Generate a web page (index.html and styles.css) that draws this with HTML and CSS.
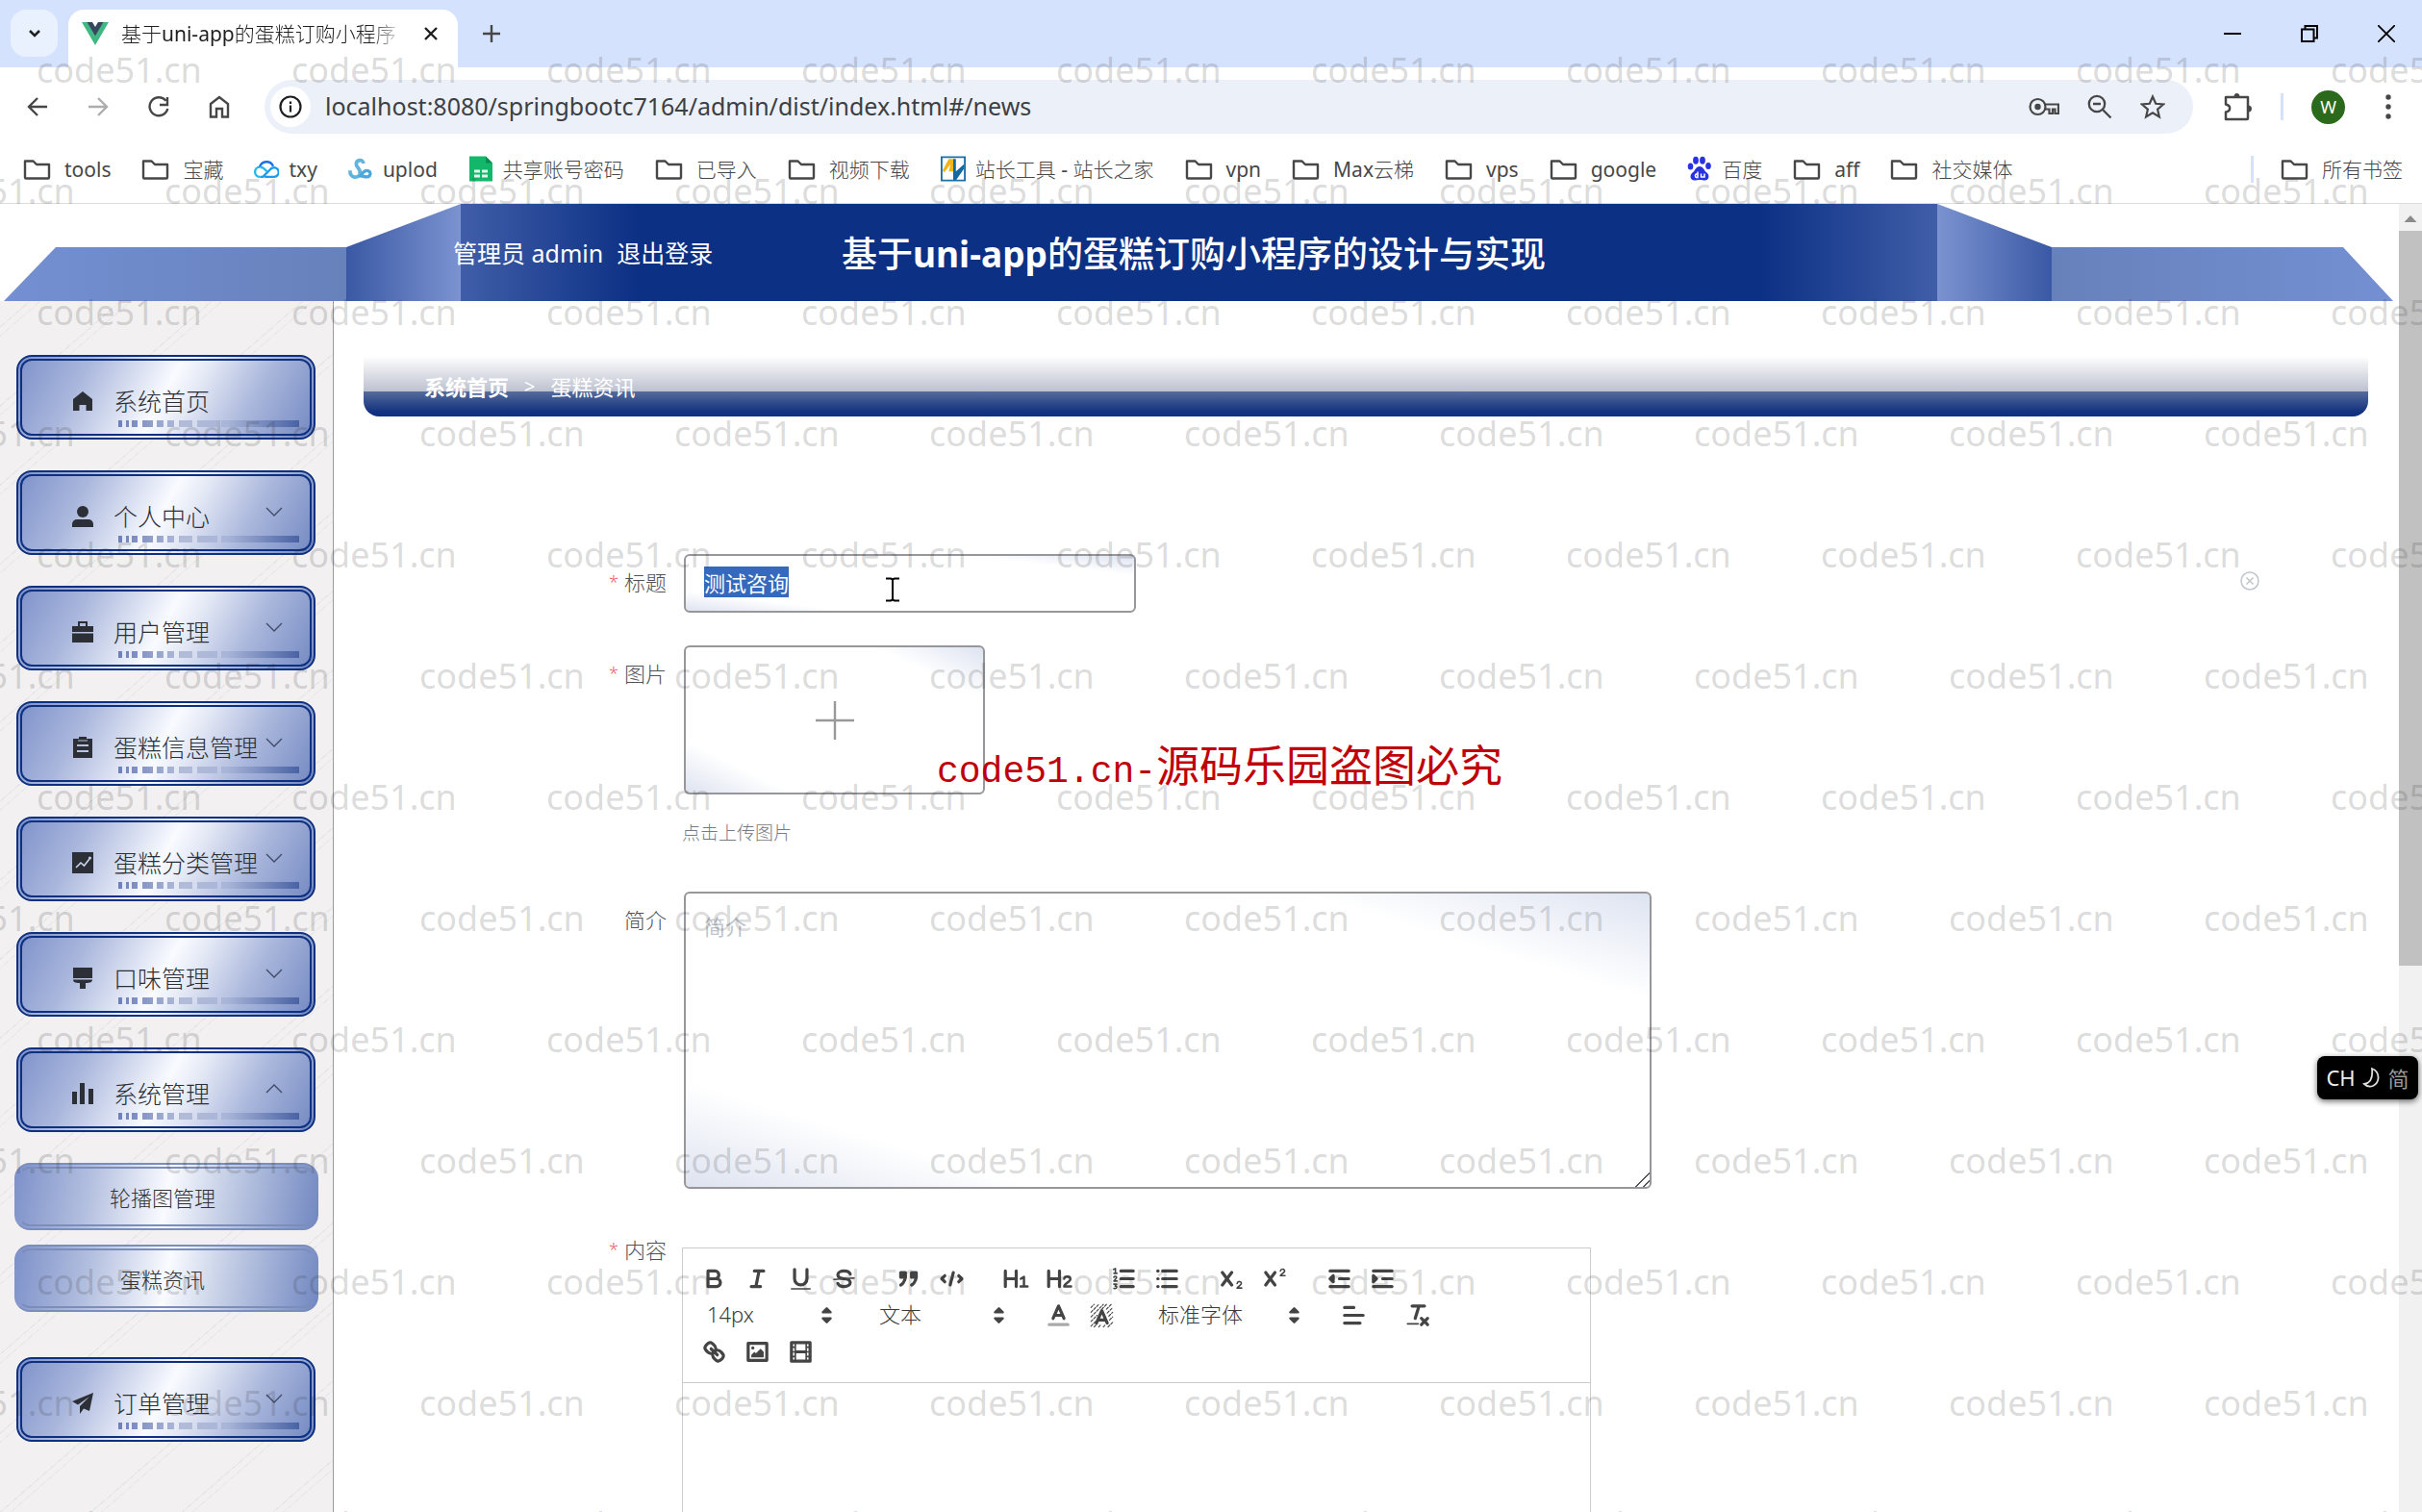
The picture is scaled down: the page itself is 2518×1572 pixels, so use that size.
FILE: index.html
```html
<!DOCTYPE html>
<html lang="zh-CN">
<head>
<meta charset="utf-8">
<meta name="viewport" content="width=device-width, initial-scale=1">
<title>基于uni-app的蛋糕订购小程序的设计与实现</title>
<link rel="stylesheet" href="styles.css">
</head>
<body>
<svg class="defs" aria-hidden="true">
  <symbol id="folder" viewBox="0 0 29 24"><path d="M2 20V3.500h8.500l3.500 3.500h13V20.500a1 1 0 0 1-1 1H3a1 1 0 0 1-1-1z" fill="none" stroke="#474747" stroke-width="2.400" stroke-linejoin="round"/></symbol>
  <symbol id="down" viewBox="0 0 18 18"><path d="M1 5l8 8 8-8" fill="none" stroke="#3f4a66" stroke-width="1.300"/></symbol>
  <symbol id="updown" viewBox="0 0 18 18"><path d="M6.500 11h5L9 13.500zM6.500 7h5L9 4.500z" fill="#444" stroke="#444" stroke-width="1.500" stroke-linejoin="round"/></symbol>
  <linearGradient id="bar" x1="0" x2="1"><stop offset="0" stop-color="#6d7fb9"/><stop offset=".35" stop-color="#b2bcd8"/><stop offset=".6" stop-color="#a9b5d8"/><stop offset="1" stop-color="#4862a4"/></linearGradient>
  <symbol id="ticks" viewBox="0 0 188 7" preserveAspectRatio="none"><path fill="url(#bar)" d="M0 0h4v7H0zM8 0h3v7H8zM14 0h6v7h-6zM25 0h11v7H25zM40 0h7v7h-7zM51 0h7v7h-7zM63 0h14v7H63zM82 0h21v7H82zM107 0h81v7h-81z"/></symbol>
</svg>

<div class="browser">
  <header class="tabstrip">
    <button class="tabsearch" type="button" aria-label="搜索标签页"><svg width="14" height="10" viewBox="0 0 14 10"><path d="M2 2l5 5 5-5" fill="none" stroke="#1f1f1f" stroke-width="2.500"/></svg></button>
    <div class="tab">
      <svg width="28" height="24" viewBox="0 0 28 24"><path d="M0 0h6l8 14 8-14h6L14 24z" fill="#41b883"/><path d="M5.500 0h5.500l3 5 3-5h5.500L14 14.500z" fill="#35495e"/></svg>
      <span class="tab-title">基于uni-app的蛋糕订购小程序</span>
      <button class="plain" type="button" aria-label="关闭标签页"><svg width="16" height="16" viewBox="0 0 16 16"><path d="M2 2l12 12M14 2L2 14" stroke="#1f1f1f" stroke-width="2.400"/></svg></button>
    </div>
    <button class="plain newtab" type="button" aria-label="新建标签页"><svg width="18" height="18" viewBox="0 0 18 18"><path d="M9 0v18M0 9h18" stroke="#474747" stroke-width="2.400"/></svg></button>
    <div class="window-buttons">
      <button class="plain" type="button" aria-label="最小化"><svg width="18" height="18" viewBox="0 0 18 18"><path d="M0 9h18" stroke="#000" stroke-width="2"/></svg></button>
      <button class="plain" type="button" aria-label="还原"><svg width="18" height="18" viewBox="0 0 18 18"><path d="M1 4.500h12.500V17H1zM4.500 4V1H17v12.500h-3" fill="none" stroke="#000" stroke-width="2"/></svg></button>
      <button class="plain" type="button" aria-label="关闭"><svg width="18" height="18" viewBox="0 0 18 18"><path d="M0 0l18 18M18 0L0 18" stroke="#000" stroke-width="1.800"/></svg></button>
    </div>
  </header>

  <div class="toolbar">
    <nav class="nav-buttons">
      <button class="plain" type="button" aria-label="后退"><svg width="22" height="22" viewBox="0 0 22 22"><path d="M21 11H2M11 2l-9 9 9 9" fill="none" stroke="#474747" stroke-width="2.400"/></svg></button>
      <button class="plain" type="button" aria-label="前进"><svg width="22" height="22" viewBox="0 0 22 22"><path d="M1 11h19M11 2l9 9-9 9" fill="none" stroke="#adadad" stroke-width="2.400"/></svg></button>
      <button class="plain" type="button" aria-label="重新加载"><svg width="22" height="22" viewBox="0 0 22 22"><path d="M18.500 4.800A9.500 9.500 0 1 0 20.300 13M20 1v8h-8" fill="none" stroke="#474747" stroke-width="2.400"/></svg></button>
      <button class="plain" type="button" aria-label="主页"><svg width="22" height="24" viewBox="0 0 22 24"><path d="M2 9l9-7 9 7v13.500h-6V14H8v8.500H2z" fill="none" stroke="#474747" stroke-width="2.400"/></svg></button>
    </nav>
    <div class="omnibox">
      <span class="site-info"><svg width="24" height="24" viewBox="0 0 24 24"><circle cx="12" cy="12" r="10.500" fill="none" stroke="#1f1f1f" stroke-width="2.200"/><path d="M12 10.500v7M12 6.500v2.400" stroke="#1f1f1f" stroke-width="2.200"/></svg></span>
      <input class="url" type="text" aria-label="地址" value="localhost:8080/springbootc7164/admin/dist/index.html#/news">
      <svg width="32" height="20" viewBox="0 0 32 20"><circle cx="9.500" cy="10" r="8" fill="none" stroke="#474747" stroke-width="2.200"/><circle cx="9.500" cy="10" r="3.200" fill="#474747"/><path d="M17 7.500h14V17h-3.500v-4.500H25V17h-3.500v-4.500H17" fill="none" stroke="#474747" stroke-width="2.200"/></svg>
      <svg width="26" height="26" viewBox="0 0 26 26"><circle cx="10" cy="10" r="8.200" fill="none" stroke="#474747" stroke-width="2.300"/><path d="M16 16l8.500 8.500M6 10h8" stroke="#474747" stroke-width="2.400"/></svg>
      <svg width="26" height="26" viewBox="0 0 26 26"><path d="M13 2.500l3.200 7.300 7.900.7-6 5.200 1.800 7.800-6.900-4.100-6.900 4.100 1.800-7.800-6-5.200 7.900-.7z" fill="none" stroke="#474747" stroke-width="2.200"/></svg>
    </div>
    <svg width="30" height="30" viewBox="0 0 30 30"><path d="M2 5h23v22a1 1 0 0 1-1 1H2v-7.500c5.500-1 5.500-7 0-8z" fill="none" stroke="#474747" stroke-width="2.500" stroke-linejoin="round"/><path d="M10.500 5a3 4 0 0 1 6 0zM25 13.500a4 3.500 0 0 1 0 7z" fill="#474747"/></svg>
    <span class="sep"></span>
    <span class="avatar">W</span>
    <svg class="dots" width="6" height="26" viewBox="0 0 6 26"><g fill="#474747"><circle cx="3" cy="3" r="2.700"/><circle cx="3" cy="13" r="2.700"/><circle cx="3" cy="23" r="2.700"/></g></svg>
  </div>

  <nav class="bookmarks">
    <a href="#tools"><svg class="bm"><use href="#folder"/></svg>tools</a>
    <a href="#bz"><svg class="bm"><use href="#folder"/></svg>宝藏</a>
    <a href="#txy"><svg class="bm site" viewBox="0 0 28 24"><g fill="none" stroke-width="2.600"><path d="M7 21a5.500 5.500 0 0 1-.5-11" stroke="#2ab7ea"/><path d="M6.500 10a8 8 0 0 1 15-1" stroke="#1e6fe0"/><path d="M7 21h3L19 12a5.200 5.200 0 1 1 3 9H12" stroke="#1b9cec"/><path d="M7 10.500a6 6 0 0 1 5 2l3 3" stroke="#2ab7ea"/></g></svg>txy</a>
    <a href="#uplod"><svg class="bm site" viewBox="0 0 28 24"><g fill="none" stroke-width="4"><path d="M2 14c0 9 9 9 11 4 2-6-4-7-4-11 0-6 8-6 8-1" stroke="#62b4dc"/><path d="M14 20c2-3 3-6 7-6 5 0 5 7 0 7-3 0-5-1-7-1z" stroke="#4aa9dc" stroke-width="3.500"/></g></svg>uplod</a>
    <a href="#sheet"><svg class="bm site" viewBox="0 0 26 26"><path d="M1 0h17l7 7v19H1z" fill="#12b76a"/><path d="M18 0l7 7h-7z" fill="#0a8d4f"/><path d="M6 14h6v3H6zM14 14h6v3h-6zM6 19h6v3H6zM14 19h6v3h-6z" fill="#e4f7ed"/></svg>共享账号密码</a>
    <a href="#in"><svg class="bm"><use href="#folder"/></svg>已导入</a>
    <a href="#video"><svg class="bm"><use href="#folder"/></svg>视频下载</a>
    <a href="#zz"><svg class="bm site" viewBox="0 0 28 28"><path d="M1 1h26v26H1z" fill="#fff" stroke="#1a6fa5" stroke-width="2"/><path d="M2 16L9 3h5v14H9l2-8-7 9z" fill="#f3b51b"/><path d="M14 3h3v14l9-8v5l-9 13h-3z" fill="#14699f"/></svg>站长工具 - 站长之家</a>
    <a href="#vpn"><svg class="bm"><use href="#folder"/></svg>vpn</a>
    <a href="#max"><svg class="bm"><use href="#folder"/></svg>Max云梯</a>
    <a href="#vps"><svg class="bm"><use href="#folder"/></svg>vps</a>
    <a href="#google"><svg class="bm"><use href="#folder"/></svg>google</a>
    <a href="#baidu"><svg class="bm site" viewBox="0 0 26 26"><g fill="#2932e1"><ellipse cx="3.500" cy="10.500" rx="2.800" ry="3.600"/><ellipse cx="9" cy="4.200" rx="2.900" ry="4"/><ellipse cx="16" cy="4.200" rx="2.900" ry="4"/><ellipse cx="22" cy="10" rx="2.800" ry="3.600"/><path d="M13 10.500c4 0 4.500 4.500 7.500 6.500 3.500 3 2 8-2 8-2 0-3.500-.5-5.500-.5s-3.500.5-5.500.5c-4 0-5.500-5-2-8 3-2 3.500-6.500 7.500-6.500z"/></g><path d="M11 16v6H9.500a2 2 0 0 1 0-3.500H11M14.500 18v3.500h3.500V18" fill="none" stroke="#fff" stroke-width="1.500"/></svg>百度</a>
    <a href="#aff"><svg class="bm"><use href="#folder"/></svg>aff</a>
    <a href="#social"><svg class="bm"><use href="#folder"/></svg>社交媒体</a>
    <span class="sep push"></span>
    <a class="all" href="#all"><svg class="bm"><use href="#folder"/></svg>所有书签</a>
  </nav>

  <div class="viewport">
    <div class="page">
      <header class="banner">
        <svg class="banner-art" viewBox="0 0 2494 101" preserveAspectRatio="none" aria-hidden="true">
          <defs>
            <linearGradient id="wl" x1="0" x2="1"><stop offset="0" stop-color="#7490d2"/><stop offset="1" stop-color="#6781bb"/></linearGradient>
            <linearGradient id="wr" x1="1" x2="0"><stop offset="0" stop-color="#7490d2"/><stop offset="1" stop-color="#6781bb"/></linearGradient>
            <linearGradient id="fl" x1="0" x2="1"><stop offset="0" stop-color="#3a58a4"/><stop offset="1" stop-color="#7b93d0"/></linearGradient>
            <linearGradient id="fr" x1="1" x2="0"><stop offset="0" stop-color="#3a58a4"/><stop offset="1" stop-color="#7b93d0"/></linearGradient>
            <linearGradient id="mid" x1="0" x2="1"><stop offset="0" stop-color="#405ea8"/><stop offset=".12" stop-color="#0c3084"/><stop offset=".88" stop-color="#0c3084"/><stop offset="1" stop-color="#405ea8"/></linearGradient>
          </defs>
          <path d="M58 45H360V101H4z" fill="url(#wl)"/>
          <path d="M360 45L479 0V101H360z" fill="url(#fl)"/>
          <path d="M479 0H2014V101H479z" fill="url(#mid)"/>
          <path d="M2014 0L2133 45V101H2014z" fill="url(#fr)"/>
          <path d="M2133 45H2436L2488 101H2133z" fill="url(#wr)"/>
        </svg>
        <div class="account"><span>管理员 admin</span><a href="#logout">退出登录</a></div>
        <h1>基于<b>uni-app</b>的蛋糕订购小程序的设计与实现</h1>
      </header>

      <div class="body">
        <aside class="sidebar">
          <button class="item" type="button"><svg class="ico" viewBox="0 0 22 22"><path d="M11 1l10 8v12h-6.500v-6h-7v6H1V9z"/></svg><span>系统首页</span><svg class="ticks"><use href="#ticks"/></svg></button>
          <button class="item" type="button"><svg class="ico" viewBox="0 0 22 22"><circle cx="11" cy="6" r="6"/><path d="M0 22v-3a5 5 0 0 1 5-5h12a5 5 0 0 1 5 5v3z"/></svg><span>个人中心</span><svg class="chev"><use href="#down"/></svg><svg class="ticks"><use href="#ticks"/></svg></button>
          <button class="item" type="button"><svg class="ico" viewBox="0 0 22 22"><path d="M6 5V0h10v5h6v6H0V5zm2 0h6V2H8zM0 12.500h22V22H0z"/></svg><span>用户管理</span><svg class="chev"><use href="#down"/></svg><svg class="ticks"><use href="#ticks"/></svg></button>
          <button class="item" type="button"><svg class="ico" viewBox="0 0 22 22"><path d="M7 0h8v2h6v20H1V2h6zM5 8v2h12V8zm0 6v2h12v-2zM6 4.500h10v-1H6z" fill-rule="evenodd"/></svg><span>蛋糕信息管理</span><svg class="chev"><use href="#down"/></svg><svg class="ticks"><use href="#ticks"/></svg></button>
          <button class="item" type="button"><svg class="ico" viewBox="0 0 22 22"><path d="M0 0h22v22H0z"/><path d="M4 16l5-5 3.500 3L18 7" fill="none" stroke="#cdd5ea" stroke-width="1.600"/><circle cx="18.500" cy="6" r="1.500" fill="#cdd5ea"/></svg><span>蛋糕分类管理</span><svg class="chev"><use href="#down"/></svg><svg class="ticks"><use href="#ticks"/></svg></button>
          <button class="item" type="button"><svg class="ico" viewBox="0 0 22 22"><path d="M1 0h20v11H1zM1 12.500h20c0 2.500-2 3.500-7 3.500v5a2 2 0 0 1-6 0v-5c-5 0-7-1-7-3.500z"/></svg><span>口味管理</span><svg class="chev"><use href="#down"/></svg><svg class="ticks"><use href="#ticks"/></svg></button>
          <button class="item" type="button" aria-expanded="true"><svg class="ico" viewBox="0 0 22 22"><path d="M0 9h5v13H0zM8 0h5v22H8zM17 6h5v16h-5z"/></svg><span>系统管理</span><svg class="chev up"><use href="#down"/></svg><svg class="ticks"><use href="#ticks"/></svg></button>
          <div class="submenu">
            <a href="#/config">轮播图管理</a>
            <a href="#/news">蛋糕资讯</a>
          </div>
          <button class="item" type="button"><svg class="ico" viewBox="0 0 22 22"><path d="M22 0L0 9l6 3.500L18 4 8 14v8l4-5.500 6 2.500z"/></svg><span>订单管理</span><svg class="chev"><use href="#down"/></svg><svg class="ticks"><use href="#ticks"/></svg></button>
        </aside>

        <main class="main">
          <nav class="crumbs" aria-label="面包屑"><a href="#/">系统首页</a><span class="gt">&gt;</span><span>蛋糕资讯</span></nav>

          <form class="form">
            <div class="row">
              <label class="label required" for="title">标题</label>
              <div class="control line">
                <input class="field title" id="title" type="text" value="测试咨询">
                <button class="plain clear" type="button" aria-label="清空"><svg width="20" height="20" viewBox="0 0 20 20"><circle cx="10" cy="10" r="9" fill="none" stroke="#c0c4cc" stroke-width="1.500"/><path d="M6.500 6.500l7 7M13.500 6.500l-7 7" stroke="#c0c4cc" stroke-width="1.500"/></svg></button>
              </div>
            </div>
            <div class="row">
              <label class="label required" for="upload">图片</label>
              <div class="control">
                <button class="field upload" id="upload" type="button" aria-label="上传图片"><svg width="42" height="42" viewBox="0 0 42 42"><path d="M21 1v40M1 21h40" stroke="#999" stroke-width="2.400"/></svg></button>
                <p class="hint">点击上传图片</p>
              </div>
            </div>
            <div class="row">
              <label class="label" for="brief">简介</label>
              <div class="control"><textarea class="field brief" id="brief" placeholder="简介"></textarea></div>
            </div>
            <div class="row">
              <span class="label required" id="content-label">内容</span>
              <div class="editor" role="group" aria-labelledby="content-label">
                <div class="tools">
                  <div class="group">
                    <button type="button" aria-label="粗体"><svg viewBox="0 0 18 18"><path d="M5 4h4.500a2.500 2.500 0 0 1 0 5H5zM5 9h5.500a2.500 2.500 0 0 1 0 5H5z"/></svg></button>
                    <button type="button" aria-label="斜体"><svg viewBox="0 0 18 18"><path d="M7 4h6M5 14h6M8 14l2-10"/></svg></button>
                    <button type="button" aria-label="下划线"><svg viewBox="0 0 18 18"><path d="M5 3v6a4 4 0 0 0 8 0V3"/><path class="thin" d="M3 15.500h12"/></svg></button>
                    <button type="button" aria-label="删除线"><svg viewBox="0 0 18 18"><path d="M13 6c-.5-1.300-2-2-4-2-2.300 0-4 1-4 2.500C5 8.500 7 8.800 9 9s4 .5 4 2.500c0 1.500-1.700 2.500-4 2.500-2 0-3.500-.700-4-2"/><path class="thin" d="M2.500 9.500l13-1"/></svg></button>
                  </div>
                  <div class="group">
                    <button type="button" aria-label="引用"><svg viewBox="0 0 18 18"><path class="solid" d="M4 5h3v3H4zM11 5h3v3h-3z"/><path d="M7 7.500c0 4-3 5.500-3 5.500M14 7.500c0 4-3 5.500-3 5.500"/></svg></button>
                    <button type="button" aria-label="代码"><svg viewBox="0 0 18 18"><path d="M4.500 7L2.500 9l2 2M13.500 7l2 2-2 2M10 5L8 13"/></svg></button>
                  </div>
                  <div class="group">
                    <button type="button" aria-label="标题1"><svg viewBox="0 0 18 18"><path d="M2 4v10M9 4v10M2 9h7"/><path class="mid" d="M12 9l2-1.300V14M11.800 14h4.500"/></svg></button>
                    <button type="button" aria-label="标题2"><svg viewBox="0 0 18 18"><path d="M2 4v10M9 4v10M2 9h7"/><path class="mid" d="M12 9c.5-2 4-1.800 4 .3 0 1.700-3.800 2.700-4 4.700h4.500"/></svg></button>
                  </div>
                  <div class="group">
                    <button type="button" aria-label="有序列表"><svg viewBox="0 0 18 18"><path d="M7 4h8M7 9h8M7 14h8"/><path class="thin" d="M2.300 3l1.200-.600v3M2.500 5.500h2M2.500 8c.3-.8 2-.7 1.700.4L2.500 10.500h2M2.500 12.500h1.800l-1 1.200c1.700 0 1.200 2-.8 1.500"/></svg></button>
                    <button type="button" aria-label="无序列表"><svg viewBox="0 0 18 18"><path d="M6 4h9M6 9h9M6 14h9M2.900 4h.2M2.900 9h.2M2.900 14h.2"/></svg></button>
                  </div>
                  <div class="group">
                    <button type="button" aria-label="下标"><svg viewBox="0 0 18 18"><path d="M3 5l6 8M9 5l-6 8"/><path class="thin" d="M12.500 12c.3-1.700 3-1.500 2.700.2-.2 1-2.200 1.800-2.700 2.800h3"/></svg></button>
                    <button type="button" aria-label="上标"><svg viewBox="0 0 18 18"><path d="M3 5l6 8M9 5l-6 8"/><path class="thin" d="M12.500 4c.3-1.700 3-1.500 2.700.2-.2 1-2.200 1.800-2.700 2.800h3"/></svg></button>
                  </div>
                  <div class="group">
                    <button type="button" aria-label="减少缩进"><svg viewBox="0 0 18 18"><path d="M3 4h12M9 9h6M3 14h12"/><path class="solid" d="M5 7v4L3 9z"/></svg></button>
                    <button type="button" aria-label="增加缩进"><svg viewBox="0 0 18 18"><path d="M3 4h12M9 9h6M3 14h12"/><path class="solid" d="M3 7v4l2-2z"/></svg></button>
                  </div>
                  <div class="group picker"><select aria-label="字号"><option>14px</option></select><svg><use href="#updown"/></svg></div>
                  <div class="group picker"><select aria-label="段落"><option>文本</option></select><svg><use href="#updown"/></svg></div>
                  <div class="group">
                    <button type="button" aria-label="字体颜色"><svg viewBox="0 0 18 18"><path d="M5.500 11L9 3l3.500 8M6.400 9h5.200"/><path d="M3 15h12" stroke="#aaa"/></svg></button>
                    <button type="button" aria-label="背景颜色"><svg viewBox="0 0 18 18"><path class="hatch" d="M2 4l2-2M2 7l5-5M2 10l8-8M2 13l4-4M2 16l3-3M4 16.500l2-2M9 5l3-3M12 5l3-3M12.500 7.500L16 4M13.500 9.500L16 7M14 12l2-2M7 16.500l1-1M10 16.500l1-1M13 16.500l3-3"/><path d="M5.500 14L9 6l3.500 8M6.400 12h5.200"/></svg></button>
                  </div>
                  <div class="group picker font"><select aria-label="字体"><option>标准字体</option></select><svg><use href="#updown"/></svg></div>
                  <div class="group">
                    <button type="button" aria-label="对齐"><svg viewBox="0 0 18 18"><path d="M3 4h6M3 9h12M3 14h10"/></svg></button>
                  </div>
                  <div class="group">
                    <button type="button" aria-label="清除格式"><svg viewBox="0 0 18 18"><path d="M5 3h8M9.500 3L7 11M11 11l4 4M15 11l-4 4"/><path class="thin" d="M2 14.500h7"/></svg></button>
                  </div>
                  <div class="group">
                    <button type="button" aria-label="链接"><svg viewBox="0 0 18 18"><path d="M7 7l4 4M8.900 4.577a3.476 3.476 0 0 1 .36 4.679A3.476 3.476 0 0 1 4.577 8.900C3.185 7.500 2.035 6.400 4.217 4.217S7.500 3.185 8.900 4.577ZM13.423 9.100a3.476 3.476 0 0 0-4.679-.36 3.476 3.476 0 0 0 .36 4.679c1.392 1.392 2.500 2.542 4.679.36S14.815 10.500 13.423 9.100Z"/></svg></button>
                    <button type="button" aria-label="图片"><svg viewBox="0 0 18 18"><path d="M3 3.500h12v11H3z"/><path class="solid flat" d="M5 12.500V11l2-2 1 1 3-3 2 2v3.500z"/><circle class="solid flat" cx="6" cy="6.500" r="1"/></svg></button>
                    <button type="button" aria-label="视频"><svg viewBox="0 0 18 18"><path d="M3 3h12v12H3z"/><path d="M6 9h6"/><path class="thin" d="M5.500 3v12M12.500 3v12M3 6h2.500M3 9h2.500M3 12h2.500M12.500 6H15M12.500 9H15M12.500 12H15"/></svg></button>
                  </div>
                </div>
                <div class="canvas" contenteditable="true" role="textbox" aria-labelledby="content-label"></div>
              </div>
            </div>
          </form>
        </main>
      </div>
    </div>
    <div class="scrollbar" aria-hidden="true"><svg width="24" height="28" viewBox="0 0 24 28"><path d="M12 12l6.500 7h-13z" fill="#8b8b8b"/></svg><div class="thumb"></div></div>
  </div>
</div>

<div class="watermarks" id="watermarks" aria-hidden="true"></div>
<p class="notice">code51.cn-<span>源码乐园盗图必究</span></p>
<div class="ime"><span>CH</span><svg width="20" height="22" viewBox="0 0 20 22"><path d="M10 2c8 3 9 14 1 18-4 1.500-7 0-9-2 7-1 9-7 8-16z" fill="none" stroke="#ddd" stroke-width="1.800"/></svg><span class="dim">简</span></div>
<svg class="cursor" width="16" height="26" viewBox="0 0 16 26" aria-hidden="true"><path d="M1 1.500h5l2 1 2-1h5M8 2v22M1 24.500h5l2-1 2 1h5" fill="none" stroke="#000" stroke-width="2"/></svg>
<script src="page.js"></script>
</body>
</html>
```

FILE: styles.css
```css
* { box-sizing: border-box; }

body {
  margin: 0;
  height: 100vh;
  overflow: hidden;
  position: relative;
  background: #fff;
  color: #333;
  font-family: "Noto Sans", "Noto Sans CJK SC", sans-serif;
  font-size: 22px;
}

h1, p { margin: 0; font-weight: 400; }
a { color: inherit; text-decoration: none; }
button, input, select, textarea { font: inherit; color: inherit; }
svg { display: block; flex: none; }
.defs { position: absolute; width: 0; height: 0; }
.plain { display: flex; padding: 0; border: 0; background: none; }

/* browser chrome */
.browser { height: 100vh; display: flex; flex-direction: column; }
.tabstrip { flex: none; height: 70px; padding: 10px 11px 0; display: flex; background: #d5e2fd; }
.tabsearch { width: 49px; height: 49px; padding: 0; border: 0; border-radius: 16px; background: #e9f1fe; display: flex; align-items: center; justify-content: center; }
.tab { width: 405px; margin-left: 11px; padding: 0 20px 10px 14px; border-radius: 16px 16px 0 0; background: #fff; display: flex; align-items: center; }
.tab-title { flex: 1; min-width: 0; margin: 0 20px 0 13px; overflow: hidden; white-space: nowrap; font-family: "Noto Sans", "Noto Sans CJK SC Light", "Noto Sans CJK SC", sans-serif; font-size: 21px; line-height: 32px; color: #1f1f1f; -webkit-mask-image: linear-gradient(90deg, #000 88%, transparent); mask-image: linear-gradient(90deg, #000 88%, transparent); }
.newtab { height: 50px; margin-left: 26px; align-items: center; }
.window-buttons { margin-left: auto; height: 50px; padding-right: 17px; display: flex; align-items: center; gap: 62px; }

.toolbar { flex: none; height: 82px; padding: 0 32px 0 28px; display: flex; align-items: center; background: #fff; }
.nav-buttons { display: flex; align-items: center; gap: 41px; margin-right: 36px; }
.omnibox { flex: 1; height: 56px; margin-right: 32px; padding: 0 29px 0 6px; border-radius: 28px; background: #ecf0f9; display: flex; align-items: center; gap: 29px; }
.site-info { width: 42px; height: 42px; border-radius: 21px; background: #fff; display: flex; align-items: center; justify-content: center; }
.url { flex: 1; min-width: 0; height: 40px; margin-left: -14px; padding: 0 0 2px; border: 0; outline: 0; background: none; color: #3c4043; font-size: 25px; }
.sep { width: 3px; height: 28px; background: #d5e2fd; }
.toolbar .sep { margin: 0 29px; }
.avatar { width: 35px; height: 35px; border-radius: 18px; background: #2b6a1c; color: #fff; font-size: 18px; line-height: 35px; text-align: center; }
.dots { margin-left: 42px; }

.bookmarks { flex: none; height: 60px; padding: 0 20px 12px 24px; display: flex; align-items: center; gap: 32px; border-bottom: 1px solid #dcdcdc; background: #fff; color: #474747; font-family: "Noto Sans", "Noto Sans CJK SC Light", "Noto Sans CJK SC", sans-serif; font-size: 21px; line-height: 32px; white-space: nowrap; }
.bookmarks a { display: flex; align-items: center; gap: 14px; }
.bm { width: 29px; height: 24px; }
.bm.site { width: 26px; height: 27px; margin-right: -4px; }
.push { margin-left: auto; }
.bookmarks .all { margin-left: -4px; }

/* page */
.viewport { flex: 1; min-height: 0; display: flex; overflow: hidden; }
.page { flex: 1; min-width: 0; display: flex; flex-direction: column; }
.scrollbar { width: 24px; background: #f1f1f1; }
.thumb { height: 764px; background: #c1c1c1; }

.banner { flex: none; height: 101px; display: grid; grid-template-columns: 404px 1fr; align-items: center; padding: 0 0 2px 471px; position: relative; color: #fff; white-space: nowrap; }
.banner-art { position: absolute; left: 0; top: 0; width: 100%; height: 100%; }
.account { position: relative; display: flex; gap: 14px; font-size: 25px; }
.banner h1 { position: relative; font-size: 37px; font-weight: 500; }

.body { flex: 1; min-height: 0; display: flex; }
.sidebar { flex: none; width: 347px; padding: 56px 17px 0; border-right: 1px solid #9a9a9f; display: flex; flex-direction: column; gap: 32px; overflow: hidden; background: repeating-linear-gradient(139deg, #f2f0f1 0 20px, #e6e4e6 20px 21px, #f2f0f1 21px 27px, #e9e7e9 27px 28px, #f2f0f1 28px 62px); }
.item { flex: none; width: 311px; height: 88px; padding: 22px 28px 0 52px; border: 6px double #0d3080; border-radius: 16px; display: grid; grid-template-columns: 43px 1fr 18px; grid-template-rows: 40px 7px; align-content: start; align-items: center; text-align: left; white-space: nowrap; color: #2c2f36; font-size: 25px; font-weight: 300; line-height: 40px; background: linear-gradient(118deg, #7c90c9 0%, #a9b6dc 22%, #f9fbff 49%, #e3e8f5 58%, #aab7dc 76%, #7187c1 100%) border-box; }
.item span { width: 0; }
.ico { width: 22px; height: 22px; fill: #2c2f36; }
.chev { width: 18px; height: 18px; margin-bottom: 10px; }
.up { transform: rotate(180deg); }
.ticks { grid-row: 2; grid-column: 2 / -1; width: 188px; height: 7px; margin: 0 -60px 0 5px; }
.submenu { flex: none; display: flex; flex-direction: column; gap: 15px; margin: 0 -2px 15px; }
.submenu a { height: 70px; padding-right: 8px; border: 6px double #7b8dba; border-left-color: #7b8dba00; border-right-color: #7b8dba00; border-radius: 16px; line-height: 61px; text-align: center; color: #333; font-size: 22px; font-weight: 300; background: linear-gradient(100deg, #7c90c9 0%, #b3bfdf 25%, #f9fbff 50%, #c5cfe6 68%, #7187c1 100%) border-box; }

.main { flex: 1; min-width: 0; padding: 57px 32px 0 31px; }
.crumbs { height: 63px; padding: 0 63px; border-radius: 0 0 16px 16px; display: flex; align-items: center; gap: 16px; color: #fff; font-size: 22px; line-height: 32px; background: linear-gradient(180deg, #fff 0, #bdc1cf 37px, #566c9c 37px, #13327f 58px, #0d2f80 63px); }
.crumbs a { font-weight: 700; }
.crumbs .gt { font-size: 20px; }

.form { margin-top: 143px; display: flex; flex-direction: column; gap: 34px; }
.row { display: flex; align-items: flex-start; }
.label { flex: none; width: 331px; height: 58px; padding-right: 16px; display: flex; align-items: center; justify-content: flex-end; gap: 6px; line-height: 32px; color: #505256; font-weight: 300; }
.required::before { content: "*"; color: #ee6068; font-size: 18px; line-height: 32px; }
.control { flex: 1; min-width: 0; padding-left: 2px; }
.line { display: flex; align-items: center; justify-content: space-between; }
.field { display: block; border: 2px solid #97979b; border-radius: 6px; color: #333; background: linear-gradient(to top right, #dee3f0 0, #fff 18%, #fff 82%, #dde3f1 100%); }
.title { width: 470px; height: 61px; padding: 0 19px 3px; outline: 0; }
.title::selection { background: #3569bd; color: #fff; }
.clear { margin-right: 113px; padding-bottom: 6px; }
.upload { width: 313px; height: 155px; padding: 0; display: flex; align-items: center; justify-content: center; }
.hint { margin: 14px 0 0 -2px; font-size: 19px; font-weight: 300; line-height: 53px; color: #757b86; }
.brief { width: 1006px; height: 309px; padding: 17px 19px; resize: both; }
.brief::placeholder { color: #c0c4cc; opacity: 1; }
.brief::-webkit-resizer { background: linear-gradient(135deg, transparent 0 49%, #555 49% 56%, transparent 56% 74%, #555 74% 81%, transparent 81%); }

.editor { width: 945px; height: 400px; margin-top: 27px; border: 1px solid #ccc; }
.tools { padding: 12px 10px 13px; display: flex; flex-wrap: wrap; border-bottom: 1px solid #ccc; }
.group { display: flex; align-items: center; height: 38px; margin-right: 22px; }
.group button { width: 45px; height: 38px; padding: 0 8px; border: 0; background: none; }
.group svg { width: 29px; height: 29px; fill: none; stroke: #444; stroke-width: 2; stroke-linecap: round; stroke-linejoin: round; }
.group svg .thin { stroke-width: 1; }
.group svg .mid { stroke-width: 1.5; }
.group svg .hatch { stroke-width: 0.7; stroke-dasharray: 1.6 1; }
.group svg .solid { fill: #444; }
.group svg .flat { stroke: none; }
.picker { width: 157px; padding: 0 3px 0 15px; color: #3a3a3a; font-weight: 300; }
.picker.font { width: 173px; padding-left: 14px; }
.picker select { flex: 1; min-width: 0; height: 38px; padding: 0 0 2px; border: 0; outline: 0; background: none; appearance: none; }
.canvas { outline: 0; min-height: 250px; }

/* overlays */
.watermarks { position: absolute; left: 0; top: 0; right: 0; bottom: 0; padding-top: 10px; overflow: hidden; pointer-events: none; color: rgba(40, 40, 40, .18); font-size: 36px; line-height: 126px; }
.mark-row { display: flex; margin-left: 38px; height: 126px; }
.mark-row:nth-child(even) { margin-left: -94px; }
.mark-row span { flex: none; width: 265px; }
.notice { position: absolute; left: 974px; top: 761px; color: #c00008; font-family: "Liberation Mono", "Noto Sans CJK SC", monospace; font-size: 38px; line-height: 66px; white-space: nowrap; }
.notice span { font-family: "Noto Sans CJK SC", sans-serif; font-size: 45px; }
.ime { position: absolute; right: 4px; top: 1098px; width: 105px; height: 45px; padding-bottom: 2px; border-radius: 8px; display: flex; align-items: center; justify-content: center; gap: 7px; background: #000; color: #eee; box-shadow: 0 2px 6px rgba(0, 0, 0, .6); font-size: 22px; }
.dim { color: #999; }
.cursor { position: absolute; left: 920px; top: 600px; }
```

FILE: page.js
```js
// Tile the site mark over the whole window.
const layer = document.getElementById("watermarks");
const perRow = Math.ceil(window.innerWidth / 265) + 1;
const rows = Math.ceil(window.innerHeight / 126) + 1;
for (let r = 0; r < rows; r++) {
  const row = document.createElement("div");
  row.className = "mark-row";
  for (let i = 0; i < perRow; i++) {
    const mark = document.createElement("span");
    mark.textContent = "code51.cn";
    row.append(mark);
  }
  layer.append(row);
}

const title = document.getElementById("title");
title.focus();
title.select();
```
